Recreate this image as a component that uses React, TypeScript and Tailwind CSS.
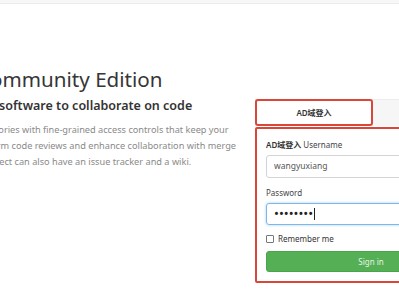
export default function App() {
  return (
    <div
      className="w-full h-[300px] overflow-hidden bg-white"
      style={{ fontFamily: '"Noto Sans", "Noto Sans CJK SC", sans-serif' }}
    >
      {/* top strip */}
      <div className="h-[4px] bg-[#f7f7f7] border-b border-[#ececec]" />

      <div className="flex items-start">
        {/* intro column, clipped on the left */}
        <div className="w-[255px] shrink-0 overflow-hidden pt-[61px]">
          <div className="-ml-[91px] whitespace-nowrap">
            <h1 className="text-[20.6px] leading-[29px] text-[#363636]">GitLab Community Edition</h1>
          </div>
          <div className="-ml-[81px] whitespace-nowrap mt-[2px]">
            <h3 className="text-[12.5px] leading-[20px] font-semibold text-[#333]">
              Open source software to collaborate on code
            </h3>
          </div>
          <div className="-ml-[83px] whitespace-nowrap mt-[6px] text-[9.2px] leading-[16px] text-[#8a8a8a]">
            <p>Manage git repositories with fine-grained access controls that keep your</p>
            <p>code secure. Perform code reviews and enhance collaboration with merge</p>
            <p>requests. Each project can also have an issue tracker and a wiki.</p>
          </div>
        </div>

        {/* login box */}
        <div className="w-[232px] shrink-0 mt-[95px]">
          <div className="flex h-[27px] bg-[#f6f6f6] border-t border-[#ececec]">
            <div className="w-[118px] -mt-px h-[27px] border-2 border-[#d9473b] rounded-[3px] bg-white flex items-center justify-center text-[8px] font-semibold text-[#333]">
              AD域登入
            </div>
          </div>
          <div className="mt-[1px] border-2 border-[#d9473b] rounded-[2px] px-[9px] pt-[8px] pb-[9px]">
            <label className="block text-[8px] text-[#444] leading-[16px]">
              <span className="font-semibold text-[#333]">AD域登入</span> Username
            </label>
            <div className="mt-[2px] h-[23px] border border-[#d4d4d4] rounded-[3px] flex items-center px-[7px] text-[8.5px] text-[#555]">
              wangyuxiang
            </div>
            <label className="block mt-[7px] text-[8px] text-[#444] leading-[16px]">Password</label>
            <div className="mt-[2px] h-[22px] border border-[#7fb6e8] rounded-[3px] shadow-[0_0_3px_rgba(102,175,233,0.6)] flex items-center px-[7px] text-[13px] text-[#222]">
              <span>••••••••</span>
              <span className="ml-[1px] w-px h-[12px] bg-[#222]" />
            </div>
            <div className="mt-[8px] flex items-center gap-[4px] h-[12px]">
              <span className="w-[8px] h-[8px] border border-[#777] rounded-[1px] bg-white" />
              <span className="text-[8px] text-[#333]">Remember me</span>
            </div>
            <div className="mt-[6px] h-[21px] rounded-[3px] bg-[#55b055] border border-[#4ca34c] flex items-center justify-center text-[8px] text-[#e6f4e6]">
              Sign in
            </div>
          </div>
        </div>
      </div>
    </div>
  );
}
